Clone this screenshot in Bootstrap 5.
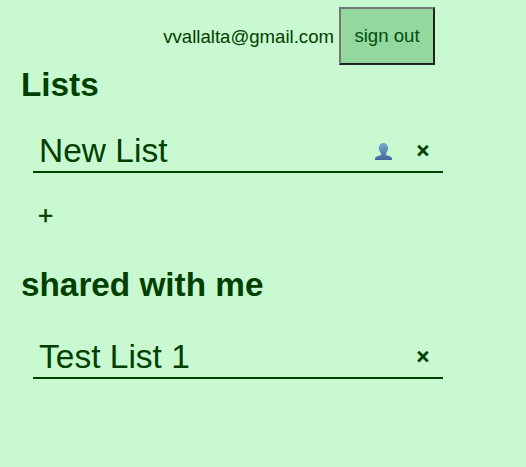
<!DOCTYPE html>
<html lang="en">
<head>
<meta charset="utf-8">
<meta name="viewport" content="width=device-width, initial-scale=1">
<title>Lists</title>
<link href="https://cdn.jsdelivr.net/npm/bootstrap@5.3.0/dist/css/bootstrap.min.css" rel="stylesheet">
<style>
body { background: #c9f9d1; color: #004000; font-family: "Liberation Sans", Arial, sans-serif; font-size: 18.6px; }
.page { width: 443px; padding: 7px 0 0 21px; }
.account { gap: 5px; padding-right: 8px; height: 58px; }
.account-email { padding-top: 2px; }
.sign-out { width: 96px; height: 58px; background: #94d89e; border: 2px solid; border-color: #767676 #212121 #212121 #767676; color: #004d0c; font-size: 18.6px; }
.section-title { font-size: 33.3px; font-weight: 700; line-height: 40px; }
.list-line { height: 44px; margin-left: 12px; padding: 2px 13px 0 6px; border-bottom: 2px solid #004000; }
.list-name { font-size: 33.5px; line-height: 40px; }
.remove { font-size: 22px; line-height: 40px; width: 14px; -webkit-text-stroke: .3px; }
.add { font-size: 26px; line-height: 40px; margin: 22px 0 0 17px; -webkit-text-stroke: .5px; }
.shared { padding-top: 30px; }
.shared .list-line { margin-top: 30px; }
.plain { background: none; border: 0; padding: 0; color: inherit; text-align: center; }
</style>
<script src="https://cdn.jsdelivr.net/npm/bootstrap@5.3.0/dist/js/bootstrap.bundle.min.js"></script>
</head>
<body>
<main class="page">
  <header class="account d-flex justify-content-end align-items-center">
    <span class="account-email">vvallalta@gmail.com</span>
    <button class="sign-out p-0">sign out</button>
  </header>
  <section>
    <h1 class="section-title mb-0">Lists</h1>
    <div class="list-line d-flex align-items-center mt-4">
      <span class="list-name me-auto">New List</span>
      <button class="plain d-flex me-4" aria-label="Share">
        <svg width="17" height="17" viewBox="0 0 17 17">
          <defs><linearGradient id="bust" x1="0" y1="0" x2="0" y2="1"><stop offset="0" stop-color="#79a9d0"/><stop offset="1" stop-color="#40659b"/></linearGradient></defs>
          <path fill="url(#bust)" d="M8.5 0C11 0 12.9 1.700 12.900 4.500c.7.2.5 1.900-.3 2.500-.3 1.500-.8 2.500-1.500 3.200v1.500c.5 1.200 5.600 1.100 5.900 3.800V17H0v-1.500c.3-2.700 5.400-2.600 5.900-3.800v-1.500c-.7-.7-1.200-1.700-1.500-3.200-.8-.6-1-2.300-.3-2.500C4.100 1.700 6 0 8.500 0z"/>
        </svg>
      </button>
      <button class="plain remove fw-bold" aria-label="Remove">×</button>
    </div>
    <button class="plain add d-block">+</button>
  </section>
  <section class="shared">
    <h2 class="section-title mb-0">shared with me</h2>
    <div class="list-line d-flex align-items-center">
      <span class="list-name me-auto">Test List 1</span>
      <button class="plain remove fw-bold" aria-label="Remove">×</button>
    </div>
  </section>
</main>
</body>
</html>
